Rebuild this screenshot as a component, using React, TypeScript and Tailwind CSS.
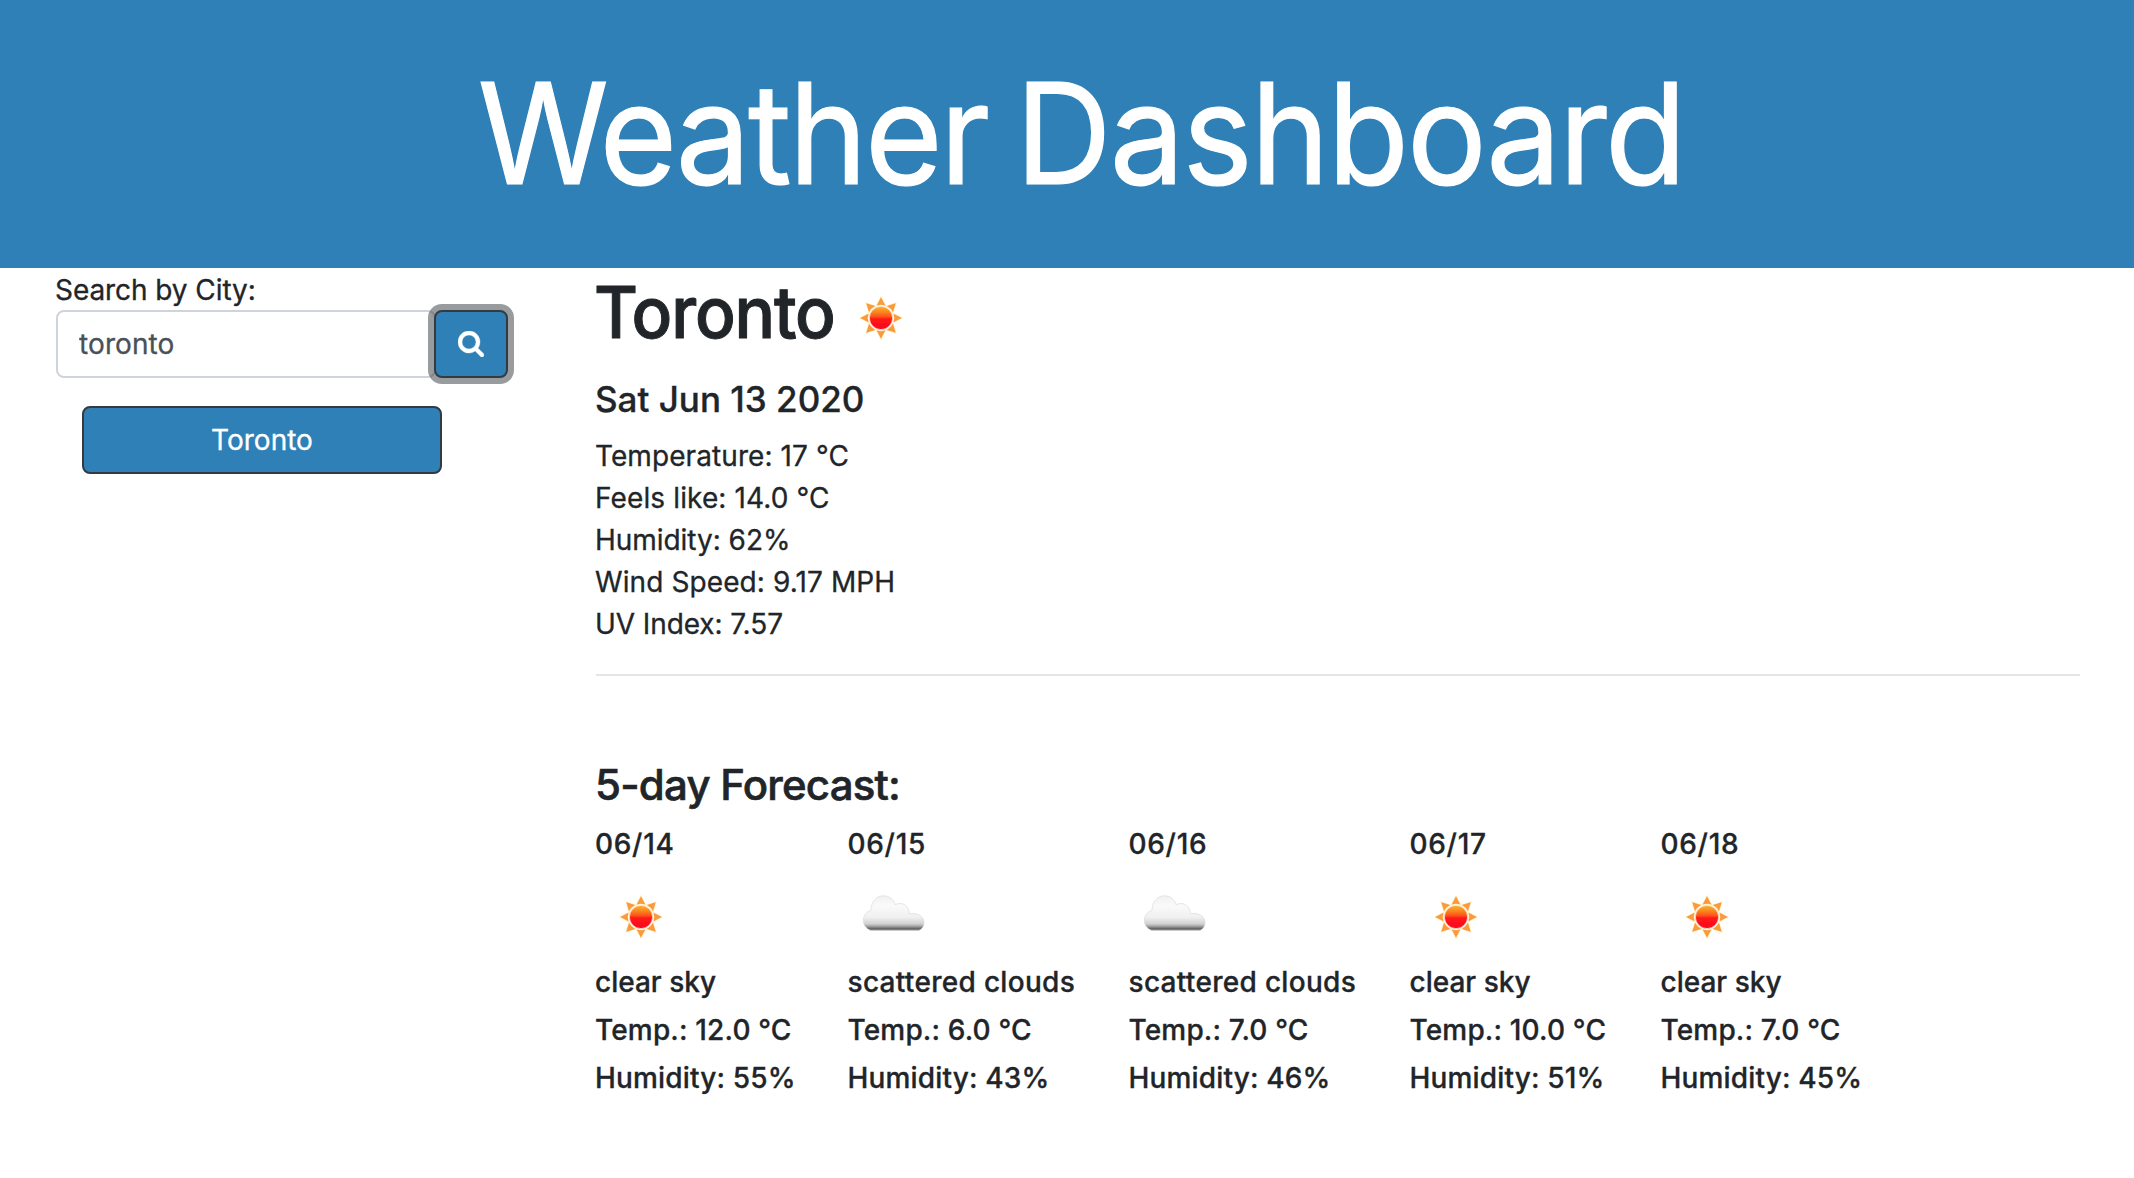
type Kind = 'sun' | 'cloud';

const conditions: { text: string; tracking: string }[] = [
  { text: 'Temperature: 17 °C', tracking: 'tracking-[0.08px]' },
  { text: 'Feels like: 14.0 °C', tracking: 'tracking-[0.12px]' },
  { text: 'Humidity: 62%', tracking: 'tracking-[-0.04px]' },
  { text: 'Wind Speed: 9.17 MPH', tracking: 'tracking-[0.1px]' },
  { text: 'UV Index: 7.57', tracking: 'tracking-[-0.08px]' },
];

const forecast: { date: string; icon: Kind; sky: string; temp: string; humidity: string }[] = [
  { date: '06/14', icon: 'sun', sky: 'clear sky', temp: '12.0', humidity: '55%' },
  { date: '06/15', icon: 'cloud', sky: 'scattered clouds', temp: '6.0', humidity: '43%' },
  { date: '06/16', icon: 'cloud', sky: 'scattered clouds', temp: '7.0', humidity: '46%' },
  { date: '06/17', icon: 'sun', sky: 'clear sky', temp: '10.0', humidity: '51%' },
  { date: '06/18', icon: 'sun', sky: 'clear sky', temp: '7.0', humidity: '45%' },
];

function SunIcon({ className }: { className?: string }) {
  return (
    <svg viewBox="0 0 92 92" width="92" height="92" className={className}>
      <defs>
        <linearGradient id="sunCore" x1="0" y1="0" x2="0" y2="1">
          <stop offset="0" stopColor="#f5b33c" />
          <stop offset="0.2" stopColor="#fb8f20" />
          <stop offset="0.42" stopColor="#fd5a1c" />
          <stop offset="0.56" stopColor="#ff1518" />
          <stop offset="1" stopColor="#fb0a1e" />
        </linearGradient>
        <filter id="sunSoft" x="-20%" y="-20%" width="140%" height="140%">
          <feGaussianBlur stdDeviation="0.5" />
        </filter>
      </defs>
      <g transform="translate(46 46)" filter="url(#sunSoft)">
        {[0, 45, 90, 135, 180, 225, 270, 315].map((a) => (
          <path key={a} d="M0 -20.8 L4.3 -12.6 Q0 -14 -4.3 -12.6 Z" fill="#fb9a3c" stroke="#ffeebf" strokeWidth="1.4" paintOrder="stroke" transform={`rotate(${a})`} />
        ))}
        <circle r="11.6" fill="url(#sunCore)" stroke="#fde3cf" strokeWidth="0.8" />
      </g>
    </svg>
  );
}

function CloudIcon({ className }: { className?: string }) {
  return (
    <svg viewBox="0 0 92 92" width="92" height="92" className={className}>
      <defs>
        <linearGradient id="cloudFill" gradientUnits="userSpaceOnUse" x1="0" y1="24" x2="0" y2="60">
          <stop offset="0" stopColor="#f0f0f0" />
          <stop offset="0.3" stopColor="#fafafa" />
          <stop offset="0.62" stopColor="#f0f0f0" />
          <stop offset="0.8" stopColor="#d2d2d2" />
          <stop offset="0.87" stopColor="#a2a2a2" />
          <stop offset="0.93" stopColor="#686868" />
          <stop offset="1" stopColor="#8c8c8c" />
        </linearGradient>
        <filter id="cloudSoft" x="-10%" y="-10%" width="120%" height="120%">
          <feGaussianBlur stdDeviation="0.6" />
        </filter>
      </defs>
      <path
        d="M22.6 59.4 C18 57.5 15.4 54 15.4 49.5 C15.4 44 19 40.3 23 39.6 C22.8 31 28.4 24.8 35.4 24.8 C41.6 24.8 45.8 28.6 47.2 34 C51.5 30.6 60.6 32.6 61.6 42.8 C70 41 76 46 76 51.4 C76 55.5 74 58 71 59.4 Z"
        fill="url(#cloudFill)"
        stroke="#d4d4d4"
        strokeOpacity="0.7"
        strokeWidth="0.8"
        filter="url(#cloudSoft)"
      />
    </svg>
  );
}

function SearchIcon() {
  return (
    <svg viewBox="0 128 1664 1664" width="26" height="26" fill="currentColor" stroke="currentColor" strokeWidth="24">
      <path d="M1152 832q0-185-131.5-316.5T704 384 387.5 515.5 256 832t131.5 316.5T704 1280t316.5-131.5T1152 832zm512 832q0 52-38 90t-90 38q-54 0-90-38l-343-342q-179 124-399 124-143 0-273.5-55.5t-225-150-150-225T0 832t55.5-273.5 150-225 225-150T704 128t273.5 55.5 225 150 150 225T1408 832q0 220-124 399l343 343q37 37 37 90z" />
    </svg>
  );
}

export default function App() {
  return (
    <div className="min-h-[1178px] bg-white font-['Inter',sans-serif] text-[28px] leading-[42px] font-normal text-[#212529] [-webkit-text-stroke:0.3px]">
      <header className="flex h-[268px] justify-center bg-[#2f80b7] pt-[49px] pl-[28px]">
        <h1 className="scale-x-95 text-[140px] leading-[168px] font-normal tracking-[-2.7px] whitespace-nowrap text-white [-webkit-text-stroke:1.2px] [word-spacing:-7px]">
          Weather <span className="tracking-[-2px]">Dashboard</span>
        </h1>
      </header>

      <div className="flex">
        <aside className="w-[595px] shrink-0 pl-[55px]">
          <label htmlFor="city" className="block h-[42px] leading-[44px] tracking-[-0.07px]">
            Search by City:
          </label>
          <div className="ml-px flex w-[452px]">
            <input
              id="city"
              defaultValue="toronto"
              className="h-[68px] w-[380px] rounded-lg border-2 border-[#ced4da] bg-white pl-[21px] tracking-[0.1px] text-[#495057] outline-none"
            />
            <button className="relative -ml-0.5 flex h-[68px] w-[74px] shrink-0 items-center justify-center rounded-lg border-2 border-[#343a40] bg-[#2f80b7] text-white shadow-[0_0_0_6px_rgba(52,58,64,0.5)]">
              <SearchIcon />
            </button>
          </div>
          <button className="mt-7 ml-[27px] block h-[68px] w-[360px] rounded-lg border-2 border-[#343a40] bg-[#2f80b7] text-center text-white">
            Toronto
          </button>
        </aside>

        <main className="w-[1485px]">
          <section>
            <div className="flex h-[110px] pt-[2px]">
              <h2 className="-ml-px w-[241px] origin-left scale-x-[0.95] text-[71px] leading-[84px] font-medium tracking-[-1.2px] whitespace-nowrap [-webkit-text-stroke:1px]">
                Toronto
              </h2>
              <SunIcon className="mt-[2px]" />
            </div>
            <h3 className="text-[35px] leading-[42px] font-medium">Sat Jun 13 2020</h3>
            <div className="mt-[15px]">
              {conditions.map((line) => (
                <p key={line.text} className={line.tracking}>{line.text}</p>
              ))}
            </div>
          </section>

          <hr className="mt-[29px] ml-px border-t-2 border-[#e5e5e5]" />

          <section className="pt-[84px]">
            <h3 className="text-[42px] leading-[50px] font-medium tracking-[-0.78px] [-webkit-text-stroke:0.6px]">5-day Forecast:</h3>
            <div className="mt-[17px] grid grid-cols-[252.5px_281px_281px_251px_auto] font-medium tracking-[0.16px]">
              {forecast.map((day) => (
                <div key={day.date} className="leading-[34px]">
                  <h5 className="tracking-[0.7px]">{day.date}</h5>
                  <div className="h-[104px] pt-[10px]">
                    {day.icon === 'sun' ? <SunIcon /> : <CloudIcon />}
                  </div>
                  <h5 className={day.icon === 'sun' ? 'tracking-[0px]' : 'tracking-[0.3px]'}>{day.sky}</h5>
                  <h5 className="mt-[14px]">Temp.: {day.temp} °C</h5>
                  <h5 className="mt-[14px]">Humidity: {day.humidity}</h5>
                </div>
              ))}
            </div>
          </section>
        </main>
      </div>
    </div>
  );
}
